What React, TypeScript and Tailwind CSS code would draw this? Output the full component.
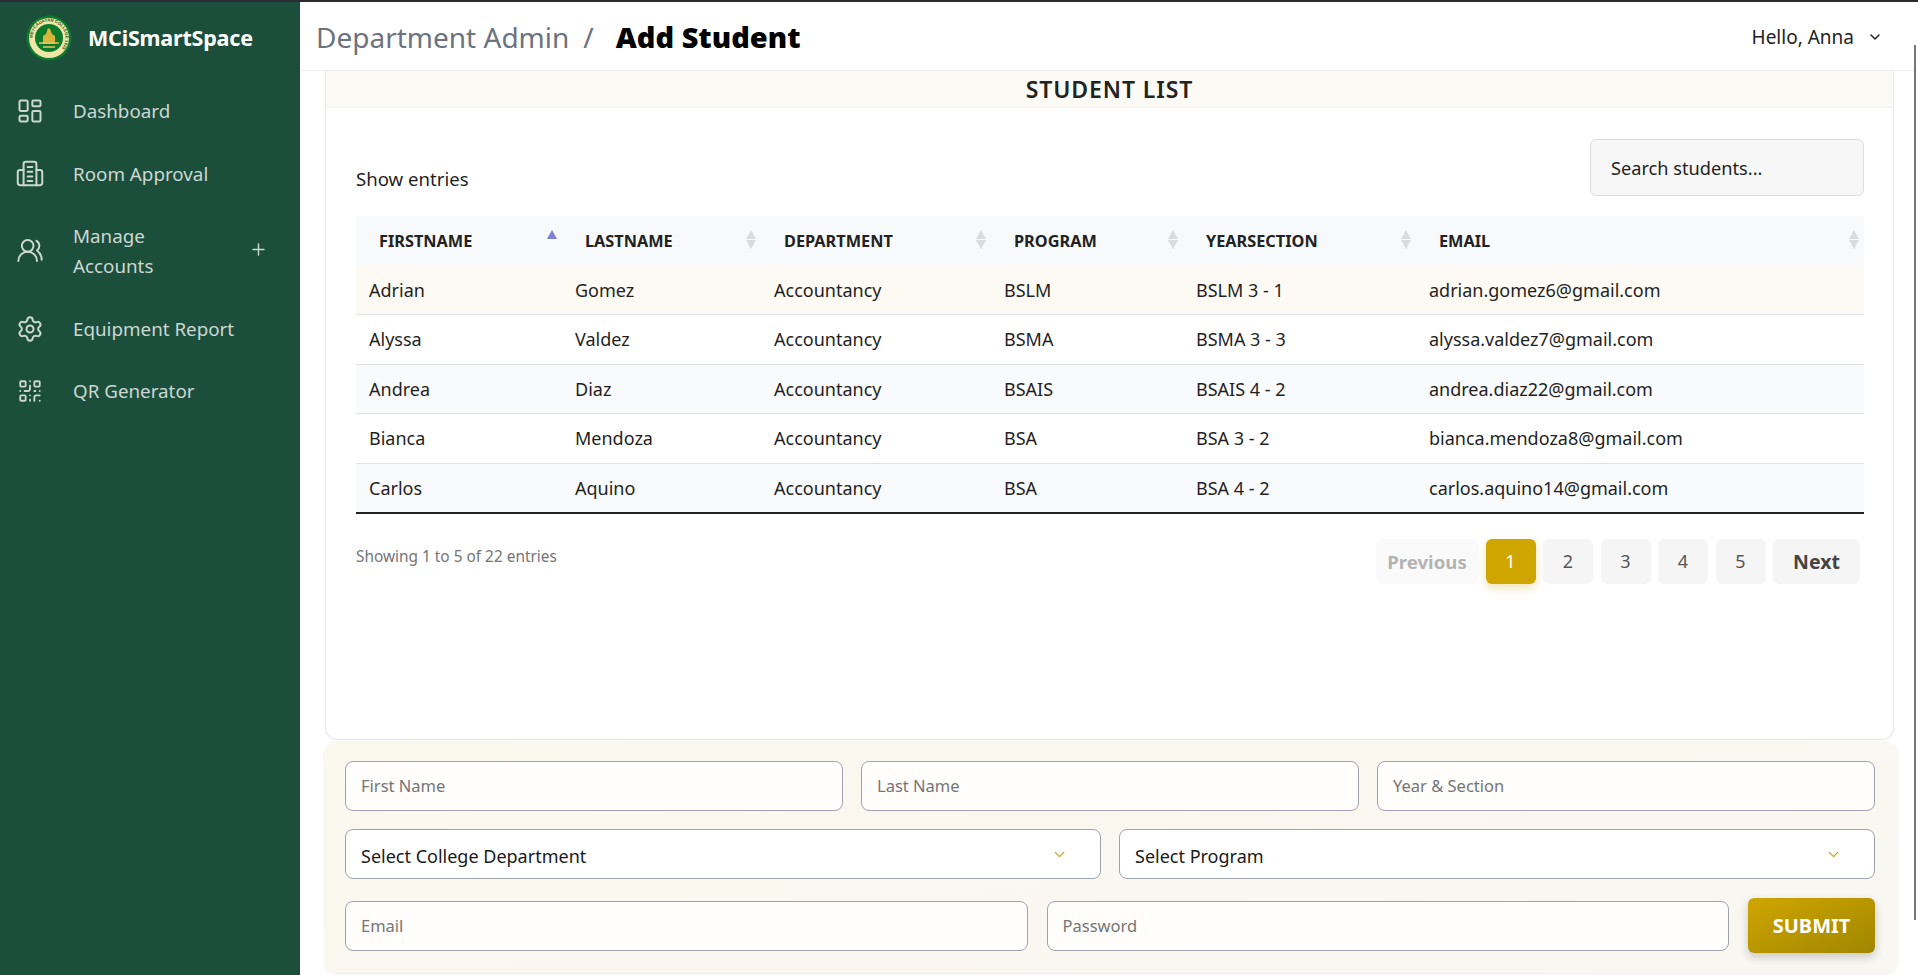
import { ChevronDown, LayoutDashboard, Plus, QrCode, Settings, UsersRound } from "lucide-react";
import type { ReactNode } from "react";

const students = [
  ["Adrian", "Gomez", "Accountancy", "BSLM", "BSLM 3 - 1", "adrian.gomez6@gmail.com"],
  ["Alyssa", "Valdez", "Accountancy", "BSMA", "BSMA 3 - 3", "alyssa.valdez7@gmail.com"],
  ["Andrea", "Diaz", "Accountancy", "BSAIS", "BSAIS 4 - 2", "andrea.diaz22@gmail.com"],
  ["Bianca", "Mendoza", "Accountancy", "BSA", "BSA 3 - 2", "bianca.mendoza8@gmail.com"],
  ["Carlos", "Aquino", "Accountancy", "BSA", "BSA 4 - 2", "carlos.aquino14@gmail.com"],
];

const columns = ["Firstname", "Lastname", "Department", "Program", "YearSection", "Email"];
const rowColors = ["bg-[#fdfaf3]", "bg-white", "bg-[#f9fafb]", "bg-white", "bg-[#f9fafb]"];

function RoomIcon() {
  return (
    <svg width="29" height="29" viewBox="0 0 24 24" fill="none" stroke="currentColor" strokeWidth="1.7" strokeLinecap="round" strokeLinejoin="round">
      <path d="M6.500 22V4A2 2 0 0 1 8.500 2h7a2 2 0 0 1 2 2v18" />
      <path d="M6.500 9H3.500a2 2 0 0 0-2 2v9a2 2 0 0 0 2 2h17a2 2 0 0 0 2-2v-9a2 2 0 0 0-2-2h-3" />
      <path d="M10 6.500h4M10 10.500h4M10 14.500h4M10 18.500h4" />
    </svg>
  );
}

function Logo() {
  return (
    <svg width="46" height="46" viewBox="0 0 46 46" className="shrink-0">
      <defs>
        <path id="seal-ring" d="M23 23m-16.500 0a16.500 16.500 0 1 1 33 0a16.500 16.500 0 1 1-33 0" />
      </defs>
      <circle cx="23" cy="23" r="22.500" fill="#0f7a2c" />
      <circle cx="23" cy="23" r="20" fill="#efe6a8" />
      <text fontSize="4.300" fontWeight="700" fill="#2f5a20" fontFamily="'Liberation Sans', sans-serif">
        <textPath href="#seal-ring">MEYCAUAYAN COLLEGE 1925</textPath>
      </text>
      <circle cx="23" cy="23" r="14" fill="#0d7a2b" />
      <path d="M17 29v-8l3-2 2-6 2 1 2 5 3 2v8z" fill="#d8b63e" />
      <path d="M13 28h20M17 32h12" stroke="#e3ca62" strokeWidth="1.500" />
    </svg>
  );
}

function NavItem({ icon, label, height, extra }: { icon: ReactNode; label: ReactNode; height: string; extra?: ReactNode }) {
  return (
    <div className={`flex items-center pl-[16px] pr-[32px] text-[#ccd7d2] ${height}`}>
      <span className="flex w-[28px] justify-center">{icon}</span>
      <span className="ml-[29px] flex-1 text-[18.800px] leading-[30px]">{label}</span>
      {extra}
    </div>
  );
}

function SortArrows({ active }: { active?: boolean }) {
  return (
    <span className="absolute right-[3px] top-[14px] flex w-[14px] flex-col items-center gap-[1px]">
      <span className={`h-0 w-0 border-x-[5px] border-b-[9px] border-x-transparent ${active ? "border-b-[#7b7fd6]" : "border-b-[#d9dbdf]"}`} />
      {!active && <span className="h-0 w-0 border-x-[5px] border-t-[9px] border-x-transparent border-t-[#d9dbdf]" />}
    </span>
  );
}

function Field({ placeholder, className }: { placeholder: string; className: string }) {
  return (
    <div className={`flex h-[50px] items-center rounded-lg border border-[#9ca3af] bg-[#fffefc] px-[15px] pt-[1px] text-[16.500px] text-[#757575] ${className}`}>
      {placeholder}
    </div>
  );
}

function SelectField({ label }: { label: string }) {
  return (
    <div className="flex h-[50px] flex-1 items-center justify-between rounded-lg border border-[#9ca3af] bg-white pl-[15px] pr-[32px] text-[18px] text-[#1a1a1a]">
      <span className="pt-[4px]">{label}</span>
      <ChevronDown size={17} strokeWidth={1.8} className="text-[#d0a300]" />
    </div>
  );
}

function PageButton({ children, className }: { children: ReactNode; className: string }) {
  return <div className={`flex h-[45px] items-center justify-center rounded-md pt-[1px] ${className}`}>{children}</div>;
}

export default function App() {
  return (
    <div className="flex h-[975px] w-[1918px] overflow-hidden border-t-2 border-[#2b2b33] bg-white font-['Noto_Sans','Open_Sans',sans-serif] text-[#1f1f1f]">
      <aside className="w-[300px] shrink-0 bg-[#1b4f3c]">
        <div className="flex h-[72px] items-center pl-[26px]">
          <Logo />
          <span className="ml-[16px] text-[21.500px] font-bold tracking-[-0.2px] text-white">MCiSmartSpace</span>
        </div>
        <nav className="pt-[6px]">
          <NavItem icon={<LayoutDashboard size={28} strokeWidth={1.7} />} label="Dashboard" height="h-[62px]" />
          <NavItem icon={<RoomIcon />} label="Room Approval" height="h-[63px]" />
          <NavItem
            icon={<UsersRound size={29} strokeWidth={1.7} className="mb-[2px]" />}
            label={<>Manage<br />Accounts</>}
            height="h-[92px]"
            extra={<Plus size={19} strokeWidth={1.800} className="mb-[3px]" />}
          />
          <NavItem icon={<Settings size={28} strokeWidth={1.7} />} label="Equipment Report" height="h-[63px]" />
          <NavItem icon={<QrCode size={26} strokeWidth={1.7} />} label="QR Generator" height="h-[62px]" />
        </nav>
      </aside>

      <main className="relative min-w-0 flex-1">
        <header className="flex h-[69px] items-center justify-between border-b border-[#eeeeee] pl-[16px] pr-[35px] pt-[2px]">
          <div className="flex items-center text-[28px]">
            <span className="text-[#6b7280]">Department Admin</span>
            <span className="ml-[14px] text-[#6b7280]">/</span>
            <span className="ml-[22px] text-[29px] font-black text-black">Add Student</span>
          </div>
          <div className="flex items-center text-[19px] text-[#222]">
            Hello, Anna
            <ChevronDown size={16} strokeWidth={2.2} className="ml-[13px]" />
          </div>
        </header>

        <section className="ml-[25px] mr-[24px] flex h-[669px] flex-col rounded-b-xl border-x border-b border-[#e5e7eb]">
          <h2 className="h-[37px] border-b border-[#f1f1ee] bg-[#fbfaf5] text-center text-[23px] font-semibold leading-[37px] tracking-[0.9px] text-[#222]">
            STUDENT LIST
          </h2>
          <div className="pl-[30px] pr-[29px] pt-[31px]">
            <div className="flex items-center justify-between">
              <span className="pt-[23px] text-[18.600px]">Show entries</span>
              <div className="flex h-[57px] w-[274px] items-center rounded-md border border-[#dddddd] bg-[#f7f7f7] pl-[20px] pt-[2px] text-[18.200px]">
                Search students...
              </div>
            </div>

            <table className="mt-[20px] w-[1508px] table-fixed border-b-2 border-[#222] text-[18px]">
              <colgroup>
                <col className="w-[206px]" />
                <col className="w-[199px]" />
                <col className="w-[230px]" />
                <col className="w-[192px]" />
                <col className="w-[233px]" />
                <col />
              </colgroup>
              <thead>
                <tr className="h-[49px] bg-[#f8f9fb]">
                  {columns.map((col, i) => (
                    <th key={col} className="relative pl-[23px] pt-[2px] text-left text-[16.300px] font-bold uppercase text-[#222]">
                      {col}
                      <SortArrows active={i === 0} />
                    </th>
                  ))}
                </tr>
              </thead>
              <tbody>
                {students.map((row, i) => (
                  <tr key={row[0]} className={`h-[49.500px] border-t border-[#dfe1e4] first:border-t-0 ${rowColors[i]}`}>
                    {row.map((cell) => (
                      <td key={cell} className="pl-[13px] pt-[1px]">{cell}</td>
                    ))}
                  </tr>
                ))}
              </tbody>
            </table>

            <div className="mt-[25px] flex items-start justify-between pr-[4px]">
              <span className="pt-[6px] text-[15.400px] text-[#757575]">Showing 1 to 5 of 22 entries</span>
              <div className="flex gap-[7.500px]">
                <PageButton className="w-[102px] bg-[#fafafa] text-[18.600px] font-bold text-[#b3b3b3]">Previous</PageButton>
                <PageButton className="w-[50px] bg-[#cfa500] text-[18px] text-white shadow-[0_4px_10px_rgba(207,165,0,0.3)]">1</PageButton>
                <PageButton className="w-[50px] bg-[#f5f5f5] text-[18px] text-[#555]">2</PageButton>
                <PageButton className="w-[50px] bg-[#f5f5f5] text-[18px] text-[#555]">3</PageButton>
                <PageButton className="w-[50px] bg-[#f5f5f5] text-[18px] text-[#555]">4</PageButton>
                <PageButton className="w-[50px] bg-[#f5f5f5] text-[18px] text-[#555]">5</PageButton>
                <PageButton className="w-[87px] bg-[#f5f5f5] text-[19.500px] font-bold text-[#444]">Next</PageButton>
              </div>
            </div>
          </div>
        </section>

        <section className="ml-[24px] mr-[20px] mt-[1px] h-[232px] rounded-xl bg-gradient-to-br from-[#fbf8ee] to-[#f9f7f2] pl-[21px] pr-[21px] pt-[20px] shadow-[0_1px_2px_rgba(0,0,0,0.08)]">
          <div className="flex gap-[18px] pr-[2px]">
            <Field placeholder="First Name" className="flex-1" />
            <Field placeholder="Last Name" className="flex-1" />
            <Field placeholder="Year & Section" className="flex-1" />
          </div>
          <div className="mt-[18px] flex gap-[18px] pr-[2px]">
            <SelectField label="Select College Department" />
            <SelectField label="Select Program" />
          </div>
          <div className="mt-[19px] flex items-center gap-[19px] pr-[2px]">
            <Field placeholder="Email" className="flex-1" />
            <Field placeholder="Password" className="flex-1" />
            <div className="flex h-[55px] w-[127px] shrink-0 items-center justify-center rounded-md bg-gradient-to-br from-[#d0a600] to-[#a08600] text-[20px] font-bold text-white shadow-[0_4px_10px_rgba(0,0,0,0.2)]">
              SUBMIT
            </div>
          </div>
        </section>

        <div className="absolute right-[2px] top-[43px] h-[875px] w-[2px] bg-[#777777]" />
      </main>
    </div>
  );
}
